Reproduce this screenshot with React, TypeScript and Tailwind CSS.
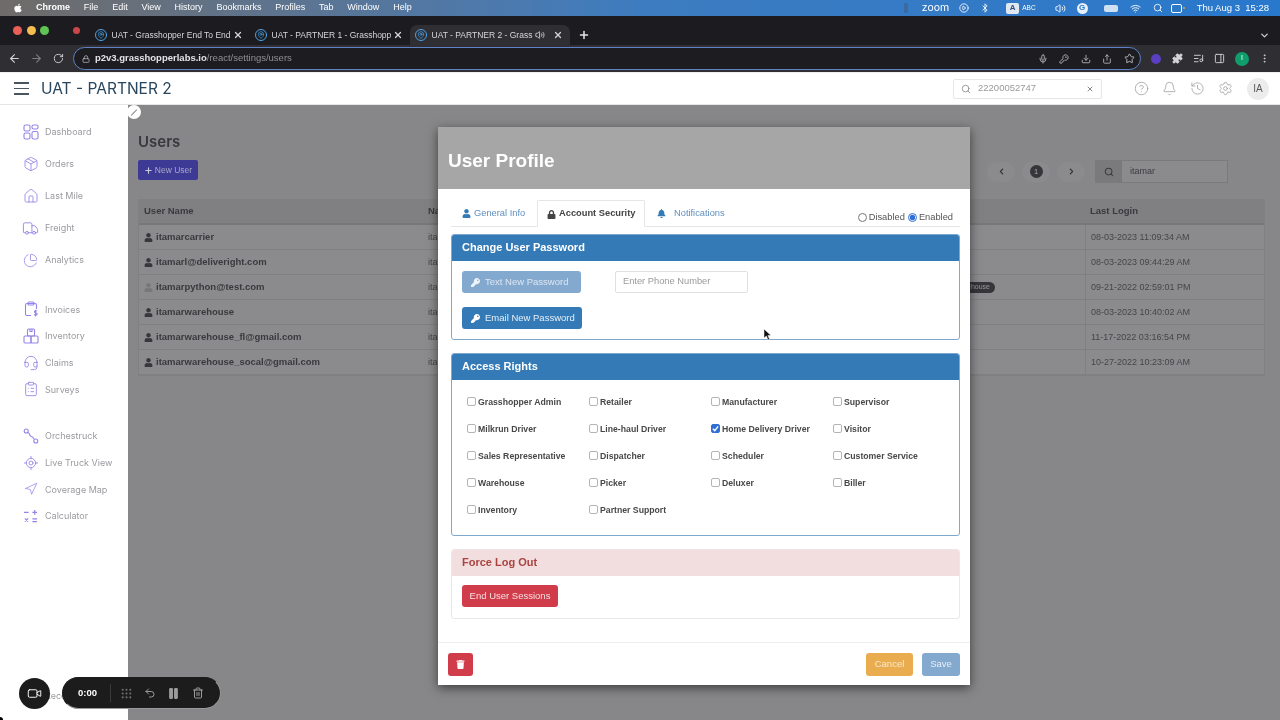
import {
  ArrowLeft,
  ArrowRight,
  Bell,
  Bluetooth,
  ChevronDown,
  CircleHelp,
  CirclePlay,
  ClipboardList,
  LocateFixed,
  EllipsisVertical,
  Grip,
  History,
  House,
  KeyRound,
  ListMusic,
  Lock,
  MapPin,
  Mic,
  Navigation,
  Package,
  PanelRight,
  Pause,
  Plus,
  Puzzle,
  RotateCw,
  Search,
  Settings,
  Share,
  Star,
  Trash2,
  Truck,
  Undo2,
  Video,
  Volume2,
  Wifi,
  X,
  ChartPie,
  Headset,
  Download,
} from "lucide-react"
import { FaApple, FaBell, FaChevronLeft, FaChevronRight, FaKey, FaLock, FaTrash, FaUser } from "react-icons/fa"

const menuItems = ["File", "Edit", "View", "History", "Bookmarks", "Profiles", "Tab", "Window", "Help"]

const DashboardIcon = () => (
  <svg width="16" height="16" viewBox="0 0 16 16" fill="none" stroke="currentColor" strokeWidth="1.1">
    <rect x="1" y="1" width="6" height="6" rx="1.6" />
    <rect x="9" y="1" width="6" height="4" rx="1.6" />
    <rect x="1" y="9" width="6" height="6" rx="1.6" />
    <rect x="9" y="7.5" width="6" height="7.5" rx="1.6" />
  </svg>
)

const InvoiceIcon = () => (
  <svg width="16" height="16" viewBox="0 0 16 16" fill="none" stroke="currentColor" strokeWidth="1.1">
    <path d="M8 14.5H4a1.5 1.5 0 0 1-1.5-1.5V4A1.5 1.5 0 0 1 4 2.5h8A1.5 1.5 0 0 1 13.5 4v4" />
    <rect x="5" y="1" width="6" height="3" rx="1" />
    <path d="M14 10.2c-.4-.6-2.6-.8-2.6.5s2.8.9 2.8 2.3-2.4 1.2-3 .4M12.6 8.8v6.7" />
  </svg>
)

const InventoryIcon = () => (
  <svg width="16" height="16" viewBox="0 0 16 16" fill="none" stroke="currentColor" strokeWidth="1.1">
    <rect x="4.5" y="1" width="7" height="7" rx="1" />
    <rect x="1" y="8" width="7" height="7" rx="1" />
    <rect x="8" y="8" width="7" height="7" rx="1" />
    <path d="M7 1v2.5h2V1" />
  </svg>
)

const RouteIcon = () => (
  <svg width="16" height="16" viewBox="0 0 16 16" fill="none" stroke="currentColor" strokeWidth="1.1">
    <circle cx="3.2" cy="3" r="2" />
    <circle cx="12.8" cy="13" r="2" />
    <path d="M5 4.500c2 .3 1 3 3 3.700 1.300.4 2.500.9 3 3" />
  </svg>
)

const CalculatorIcon = () => (
  <svg width="15" height="15" viewBox="0 0 16 16" fill="none" stroke="currentColor" strokeWidth="1.3">
    <path d="M1 3.500h5M10 3.500h5M12.500 1v5M2 10l3.500 3.500M5.500 10 2 13.500M10 10.500h5M10 13.500h5" />
  </svg>
)

const mainNav = [
  { label: "Dashboard", icon: <DashboardIcon /> },
  { label: "Orders", icon: <Package size={16} strokeWidth={1.3} /> },
  { label: "Last Mile", icon: <House size={16} strokeWidth={1.3} /> },
  { label: "Freight", icon: <Truck size={17} strokeWidth={1.3} /> },
  { label: "Analytics", icon: <ChartPie size={15} strokeWidth={1.3} /> },
]
const billingNav = [
  { label: "Invoices", icon: <InvoiceIcon /> },
  { label: "Inventory", icon: <InventoryIcon /> },
  { label: "Claims", icon: <Headset size={16} strokeWidth={1.3} /> },
  { label: "Surveys", icon: <ClipboardList size={16} strokeWidth={1.3} /> },
]
const toolNav = [
  { label: "Orchestruck", icon: <RouteIcon /> },
  { label: "Live Truck View", icon: <LocateFixed size={16} strokeWidth={1.3} /> },
  { label: "Coverage Map", icon: <Navigation size={14} strokeWidth={1.3} /> },
  { label: "Calculator", icon: <CalculatorIcon /> },
]

const users = [
  { name: "itamarcarrier", login: "08-03-2023 11:09:34 AM" },
  { name: "itamarl@deliveright.com", login: "08-03-2023 09:44:29 AM" },
  { name: "itamarpython@test.com", login: "09-21-2022 02:59:01 PM", faded: true, badge: "Warehouse" },
  { name: "itamarwarehouse", login: "08-03-2023 10:40:02 AM" },
  { name: "itamarwarehouse_fl@gmail.com", login: "11-17-2022 03:16:54 PM" },
  { name: "itamarwarehouse_socal@gmail.com", login: "10-27-2022 10:23:09 AM" },
]

const roles = [
  "Grasshopper Admin", "Retailer", "Manufacturer", "Supervisor",
  "Milkrun Driver", "Line-haul Driver", "Home Delivery Driver", "Visitor",
  "Sales Representative", "Dispatcher", "Scheduler", "Customer Service",
  "Warehouse", "Picker", "Deluxer", "Biller",
  "Inventory", "Partner Support",
]

const BrowserTab = ({ title, active, sound }: { title: string; active?: boolean; sound?: boolean }) => (
  <div className={`flex h-full w-[160px] items-center pl-[5px] pr-[7px] ${active ? "rounded-t-[7px] bg-[#2f2f33]" : ""}`}>
    <span className="flex h-[12px] w-[12px] items-center justify-center rounded-full border border-[#4ba3e8]">
      <MapPin size={8} className="text-[#4ba3e8]" />
    </span>
    <span className="ml-[5px] flex-1 whitespace-nowrap text-[8.5px] text-[#d6d6d8]">{title}</span>
    {sound && <Volume2 size={10} className="mr-[8px] text-[#e0e0e0]" />}
    <X size={10} strokeWidth={3} className="text-[#d6d6d8]" />
  </div>
)

const NavRow = ({ label, icon, height }: { label: string; icon: React.ReactNode; height: string }) => (
  <div className={`flex items-center pl-[22px] ${height}`}>
    <span className="flex w-[17px] justify-center text-[#9685e8]">{icon}</span>
    <span className="ml-[6px] whitespace-nowrap font-['Inter',sans-serif] text-[9px] text-[#9a9aa0]">{label}</span>
  </div>
)

const Panel = ({
  title,
  tone,
  className,
  children,
}: {
  title: string
  tone: "blue" | "red"
  className: string
  children: React.ReactNode
}) => (
  <section
    className={`ml-[13px] mr-[10px] overflow-hidden rounded-[3px] border ${tone === "blue" ? "border-[#7fa8cf]" : "border-[#ebe6e8]"} ${className}`}
  >
    <h3
      className={`flex h-[26px] items-center px-[10px] pb-[1px] text-[11px] ${
        tone === "blue" ? "bg-[#337ab7] font-bold text-white" : "bg-[#f2dede] font-bold text-[#a94442]"
      }`}
    >
      {title}
    </h3>
    {children}
  </section>
)

const RoleBox = ({ checked }: { checked: boolean }) => (
  <span
    className={`mb-[2px] flex h-[9px] w-[9px] shrink-0 items-center justify-center rounded-[2px] border ${
      checked ? "border-[#2f6fd6] bg-[#2f6fd6]" : "border-[#b4b4b4] bg-white"
    }`}
  >
    {checked && (
      <svg width="7" height="7" viewBox="0 0 8 8" fill="none" stroke="#fff" strokeWidth="1.6">
        <path d="M1 4.200 3.200 6.400 7 1.500" />
      </svg>
    )}
  </span>
)

export default function App() {
  return (
    <div className="relative flex h-[720px] w-[1280px] flex-col overflow-hidden bg-white font-['Liberation_Sans',sans-serif] blur-[0.5px]">
      {/* mac menu bar */}
      <div className="flex h-[16px] shrink-0 items-center justify-between bg-gradient-to-r from-[#6f6b68] via-[#3d7cc0] to-[#2878cc] pl-[13px] pr-[11px] text-[9px] text-white">
        <div className="flex items-center gap-[13.8px]">
          <span className="flex items-center gap-[13px]">
            <FaApple size={10} />
            <span className="font-bold">Chrome</span>
          </span>
          {menuItems.map((item) => (
            <span key={item}>{item}</span>
          ))}
        </div>
        <div className="flex items-center">
          <span className="h-[10px] w-[4px] rounded-[1px] bg-[#3a6aa0]" />
          <span className="ml-[14px] font-['Inter',sans-serif] text-[10.5px]">zoom</span>
          <CirclePlay size={10} className="ml-[10px]" />
          <Bluetooth size={10} className="ml-[11px]" />
          <span className="ml-[16px] flex h-[11px] w-[13px] items-center justify-center rounded-[2px] bg-[#dfe8f3] text-[8px] font-bold text-[#33507a]">A</span>
          <span className="ml-[3px] text-[6.5px]">ABC</span>
          <Volume2 size={11} className="ml-[19px]" />
          <span className="ml-[11px] flex h-[11px] w-[11px] items-center justify-center rounded-full bg-[#e8f0fa] text-[8px] font-bold text-[#2878cc]">G</span>
          <span className="ml-[16px] h-[7px] w-[14px] rounded-[2px] bg-[#cfe0f3]" />
          <Wifi size={11} className="ml-[12px]" />
          <Search size={10} className="ml-[12px]" />
          <span className="ml-[8px] h-[9px] w-[11px] rounded-[2px] border border-white" />
          <span className="ml-[1px] h-[2px] w-[2px] rounded-full bg-[#e6a23c]" />
          <span className="ml-[12px] text-[9.5px]">Thu Aug 3&nbsp; 15:28</span>
        </div>
      </div>

      {/* tab strip */}
      <div className="flex h-[29px] shrink-0 items-end bg-[#1c1c20] pl-[13px] pr-[10px]">
        <div className="flex h-full items-center gap-[4.5px]">
          <span className="h-[9px] w-[9px] rounded-full bg-[#ec5f57]" />
          <span className="h-[9px] w-[9px] rounded-full bg-[#f4bd4f]" />
          <span className="h-[9px] w-[9px] rounded-full bg-[#5fc454]" />
        </div>
        <div className="ml-[23.5px] flex h-full items-center">
          <span className="h-[7px] w-[7px] rounded-full bg-[#c9474a]" />
        </div>
        <div className="ml-[10px] flex h-[20px] items-center">
          <BrowserTab title="UAT - Grasshopper End To End" />
          <BrowserTab title="UAT - PARTNER 1 - Grasshopp" />
          <BrowserTab title="UAT - PARTNER 2 - Grass" active sound />
          <Plus size={12} strokeWidth={3} className="ml-[8px] text-[#e6e6e6]" />
        </div>
        <ChevronDown size={11} strokeWidth={3} className="mb-[4px] ml-auto text-[#c8c8c8]" />
      </div>

      {/* address bar */}
      <div className="flex h-[27px] shrink-0 items-center bg-[#2f2f33] pl-[8px] pr-[10px] text-[#d4d4d6]">
        <ArrowLeft size={13} />
        <ArrowRight size={13} className="ml-[9px] text-[#7c7c80]" />
        <RotateCw size={11} className="ml-[10px]" />
        <div className="ml-[9px] flex h-[23px] w-[1071px] items-center rounded-full border border-[#5f82c8] bg-[#1d1d21] pl-[8px] pr-[5px]">
          <Lock size={8} className="text-[#c8c8c8]" />
          <span className="ml-[5px] text-[9.5px] font-bold text-[#e4e4e6]">p2v3.grasshopperlabs.io</span>
          <span className="text-[9.5px] text-[#8f8f94]">/react/settings/users</span>
          <div className="ml-auto flex items-center gap-[11.5px] text-[#bdbdc0]">
            <Mic size={10} />
            <KeyRound size={10} />
            <Download size={10} />
            <Share size={10} />
            <Star size={11} />
          </div>
        </div>
        <div className="ml-[10px] flex items-center gap-[10px]">
          <span className="mr-[1.5px] h-[10px] w-[10px] rounded-full bg-[#5a3fc0]" />
          <Puzzle size={11} fill="currentColor" />
          <ListMusic size={11} />
          <PanelRight size={11} />
          <span className="flex h-[14px] w-[14px] items-center justify-center rounded-full bg-[#0f9d6b] text-[7px] text-white">I</span>
          <EllipsisVertical size={11} />
        </div>
      </div>

      {/* app header */}
      <header className="flex h-[33px] shrink-0 items-center border-b border-t border-[#e5e5e5] border-t-[#f0f0f0] bg-white pl-[14px] pr-[11px]">
        <div className="flex w-[15px] flex-col gap-[4px]">
          <span className="h-[1.5px] bg-[#4a5560]" />
          <span className="h-[1.5px] bg-[#4a5560]" />
          <span className="h-[1.5px] bg-[#4a5560]" />
        </div>
        <span className="ml-[12px] whitespace-nowrap font-['Inter',sans-serif] text-[15.5px] text-[#28465e]">UAT - PARTNER 2</span>
        <div className="ml-auto flex h-[20px] w-[149px] items-center rounded-[2px] border border-[#e6e6e6] pl-[7px] pr-[7px]">
          <Search size={10} className="text-[#8a8a8a]" />
          <span className="ml-[7px] text-[9.5px] text-[#9a9a9a]">22200052747</span>
          <X size={8} strokeWidth={3} className="ml-auto text-[#888]" />
        </div>
        <div className="ml-[32px] flex items-center gap-[13px] text-[#9a9a9e]">
          <CircleHelp size={15} strokeWidth={1.2} />
          <Bell size={15} strokeWidth={1.2} />
          <History size={15} strokeWidth={1.2} />
          <Settings size={15} strokeWidth={1.2} />
          <span className="ml-[1px] flex h-[22px] w-[22px] items-center justify-center rounded-full bg-[#ececec] text-[10px] text-[#5a5a5a]">IA</span>
        </div>
      </header>

      <div className="flex min-h-0 flex-1">
        {/* sidebar */}
        <aside className="flex w-[128px] shrink-0 flex-col bg-white pt-[11px]">
          {mainNav.map((item) => (
            <NavRow key={item.label} label={item.label} icon={item.icon} height="h-[32px]" />
          ))}
          <div className="mt-[20px]">
            {billingNav.map((item) => (
              <NavRow key={item.label} label={item.label} icon={item.icon} height="h-[26.7px]" />
            ))}
          </div>
          <div className="mt-[20px]">
            {toolNav.map((item) => (
              <NavRow key={item.label} label={item.label} icon={item.icon} height="h-[26.7px]" />
            ))}
          </div>
          <div className="mb-[18px] ml-[45px] mt-auto font-['Inter',sans-serif] text-[9px] text-[#9a9aa0]">Recent</div>
        </aside>

        {/* users page behind the dialog */}
        <main className="relative flex-1 bg-[#878789] pl-[10px] pr-[15px] pt-[27px]">
          <h1 className="font-['Inter',sans-serif] text-[15px] font-semibold leading-[20px] text-[#38383e]">Users</h1>
          <div className="mt-[8px] flex items-start justify-between pr-[37px]">
            <button className="flex h-[20px] w-[60px] items-center justify-center gap-[2px] rounded-[2px] bg-[#3d3a96] text-[8.5px] text-[#a9a9c9]">
              <Plus size={9} strokeWidth={3} className="text-[#c9c9e0]" />
              New User
            </button>
            <div className="flex items-center">
              <span className="flex h-[20px] w-[28px] items-center justify-center rounded-full bg-[#8b8b8d] text-[#333]">
                <FaChevronLeft size={7} />
              </span>
              <span className="ml-[7px] flex h-[20px] w-[28px] items-center justify-center rounded-full bg-[#8b8b8d]">
                <span className="flex h-[13px] w-[13px] items-center justify-center rounded-full bg-[#36363a] text-[7.5px] text-[#aaa]">1</span>
              </span>
              <span className="ml-[7px] flex h-[20px] w-[28px] items-center justify-center rounded-full bg-[#8b8b8d] text-[#333]">
                <FaChevronRight size={7} />
              </span>
              <div className="ml-[10px] flex h-[23px] w-[133px] border border-[#7a7a7c] bg-[#8b8b8d]">
                <span className="flex w-[26px] items-center justify-center bg-[#7a7a7c] text-[#3c3c40]">
                  <Search size={10} strokeWidth={2.5} />
                </span>
                <span className="ml-[8px] self-center text-[9px] text-[#3c3c40]">itamar</span>
              </div>
            </div>
          </div>
          <div className="mt-[16px] border border-[#808082] bg-[#8b8b8d] text-[9px]">
            <div className="grid h-[25px] grid-cols-[284px_1fr_179px] items-center border-b-2 border-[#777779] bg-[#808082] font-bold text-[#3a3a3e]">
              <span className="pl-[5px] text-[9.5px]">User Name</span>
              <span className="pl-[5px] text-[9.5px]">Name</span>
              <span className="pl-[5px] text-[9.5px]">Last Login</span>
            </div>
            {users.map((user) => (
              <div key={user.name} className="grid h-[25px] grid-cols-[284px_1fr_179px] items-center border-b border-[#808082] text-[#46464a]">
                <span className="flex items-center gap-[3px] pl-[5px] text-[9.5px] font-bold text-[#3a3a3e]">
                  <FaUser size={9} className={user.faded ? "text-[#77777a]" : "text-[#38383c]"} />
                  {user.name}
                </span>
                <span className="flex items-center justify-between pl-[5px]">
                  itamar
                  {user.badge && (
                    <span className="mr-[90px] rounded-full bg-[#36363a] px-[5px] text-[7px] text-[#9a9a9a]">{user.badge}</span>
                  )}
                </span>
                <span className="border-l border-[#808082] pl-[5px] text-[9px] leading-[25px]">{user.login}</span>
              </div>
            ))}
          </div>
        </main>
      </div>

      {/* expand handle on the sidebar edge */}
      <span className="absolute left-[127px] top-[105px] flex h-[14px] w-[14px] items-center justify-center rounded-full bg-white">
        <span className="h-[1px] w-[8px] -rotate-45 bg-[#888]" />
      </span>

      {/* dialog */}
      <div className="absolute left-[438px] top-[127px] flex h-[558px] w-[532px] flex-col bg-white shadow-[0_3px_10px_rgba(0,0,0,0.55)]">
        <div className="flex h-[62px] shrink-0 items-center bg-[#a6a6a6] pl-[10px] pt-[7px] text-[19px] font-bold text-white">User Profile</div>

        <div className="ml-[13px] mr-[10px] mt-[11px] flex h-[27px] shrink-0 items-stretch border-b border-[#e6e6e6] text-[9.3px]">
          <div className="flex w-[86px] items-center gap-[3px] pl-[11px] pt-[1px] text-[#5f8fbd]">
            <FaUser size={9} className="text-[#337ab7]" />
            General Info
          </div>
          <div className="-mb-px flex w-[108px] items-center gap-[3px] rounded-t-[2px] border border-[#e6e6e6] border-b-white bg-white pl-[9px] pt-[1px] font-bold text-[#444]">
            <FaLock size={9} />
            Account Security
          </div>
          <div className="flex items-center gap-[8px] pl-[12px] pt-[1px] text-[#5f8fbd]">
            <FaBell size={9} className="text-[#337ab7]" />
            Notifications
          </div>
          <div className="ml-auto flex items-center gap-[1px] pr-[7px] pt-[9px] text-[#555]">
            <input type="radio" name="status" readOnly className="m-0 h-[9px] w-[9px]" />
            <span className="ml-[1px] mr-[2px]">Disabled</span>
            <input type="radio" name="status" readOnly checked className="m-0 h-[9px] w-[9px] accent-[#2f6fd6]" />
            <span className="ml-[1px]">Enabled</span>
          </div>
        </div>

        <Panel title="Change User Password" tone="blue" className="mt-[7px] h-[106px] shrink-0">
          <div className="flex flex-col gap-[14px] pl-[10px] pt-[10px]">
            <div className="flex items-center">
              <button className="flex h-[22px] w-[119px] items-center gap-[5px] rounded-[3px] bg-[#84a9cf] pl-[9px] text-[9.5px] text-[#dbe6f1]">
                <FaKey size={9} className="text-[#eef3f8]" />
                Text New Password
              </button>
              <span className="ml-[34px] flex h-[22px] w-[133px] items-center rounded-[2px] border border-[#e0e0e0] pl-[7px] text-[9.3px] text-[#9a9a9a]">Enter Phone Number</span>
            </div>
            <button className="flex h-[22px] w-[120px] items-center gap-[5px] rounded-[3px] bg-[#337ab7] pl-[9px] text-[9.5px] text-[#e6eff7]">
              <FaKey size={9} className="text-white" />
              Email New Password
            </button>
          </div>
        </Panel>

        <Panel title="Access Rights" tone="blue" className="mt-[13px] h-[183px] shrink-0">
          <div className="grid auto-rows-[27px] grid-cols-[122px_122px_122px_122px] pl-[15px] pt-[9px]">
            {roles.map((role) => (
              <div key={role} className="flex items-center gap-[2px] whitespace-nowrap text-[8.7px] font-bold text-[#484848]">
                <RoleBox checked={role === "Home Delivery Driver"} />
                {role}
              </div>
            ))}
          </div>
        </Panel>

        <Panel title="Force Log Out" tone="red" className="mt-[13px] h-[70px] shrink-0">
          <div className="flex pl-[10px] pt-[9px]">
            <button className="h-[22px] w-[96px] rounded-[3px] bg-[#d13c4b] text-[9.5px] text-[#f5dfe1]">End User Sessions</button>
          </div>
        </Panel>

        <div className="mt-[23px] flex flex-1 items-center justify-between border-t border-[#eeeeee] px-[10px]">
          <button className="flex h-[23px] w-[25px] items-center justify-center rounded-[3px] bg-[#d13c4b] text-white">
            <FaTrash size={9} />
          </button>
          <div className="flex gap-[9px]">
            <button className="h-[23px] w-[47px] rounded-[3px] bg-[#e9ad50] text-[9.5px] text-[#f9e8cd]">Cancel</button>
            <button className="h-[23px] w-[38px] rounded-[3px] bg-[#84a9cf] text-[9.5px] text-[#e6eef6]">Save</button>
          </div>
        </div>
      </div>

      {/* mouse pointer */}
      <svg className="absolute left-[763px] top-[328px]" width="9" height="13" viewBox="0 0 9 13">
        <path d="M1 1v9l2.400-2 1.600 4 1.600-.7L4.900 7.500H8z" fill="#111" stroke="#fff" strokeWidth="0.5" />
      </svg>

      {/* screen recorder controls */}
      <div className="absolute left-[19px] top-[678px] flex h-[31px] w-[31px] items-center justify-center rounded-full bg-[#1c1c1c] text-white">
        <Video size={15} strokeWidth={1.5} />
      </div>
      <div className="absolute left-[62px] top-[677px] flex h-[32px] w-[159px] items-center rounded-full border border-[#9a9a9a] border-l-[#1c1c1c] border-t-[#1c1c1c] bg-[#1c1c1c] pl-[15px] text-[#9c9c9c]">
        <span className="text-[9.5px] font-bold text-white">0:00</span>
        <span className="ml-[13px] h-[18px] w-px bg-[#3a3a3a]" />
        <Grip size={13} className="ml-[9px] text-[#6e6e6e]" />
        <Undo2 size={12} className="ml-[11px]" />
        <Pause size={13} fill="currentColor" className="ml-[11px]" />
        <Trash2 size={12} className="ml-[12px]" />
      </div>

      {/* screen corner */}
      <span className="absolute bottom-0 left-0 h-[3px] w-[3px] rounded-tr-full bg-black" />
    </div>
  )
}
